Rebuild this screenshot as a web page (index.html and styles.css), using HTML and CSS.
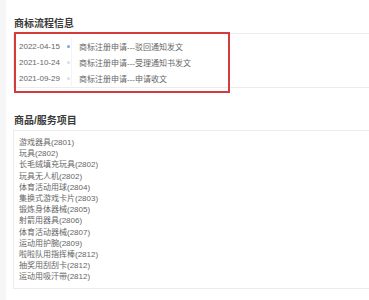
FILE: index.html
```html
<!DOCTYPE html>
<html lang="zh-CN">
<head>
  <meta charset="UTF-8">
  <meta name="viewport" content="width=device-width, initial-scale=1.0">
  <title>商标详情</title>
  <link rel="stylesheet" href="styles.css">
</head>
<body>
  <div class="panel">
    <section class="block">
      <h2>商标流程信息</h2>
      <div class="flow">
        <div class="row">
          <span class="when">2022-04-15</span>
          <span class="dot active"></span>
          <span class="what">商标注册申请---驳回通知发文</span>
        </div>
        <div class="row">
          <span class="when">2021-10-24</span>
          <span class="dot"></span>
          <span class="what">商标注册申请---受理通知书发文</span>
        </div>
        <div class="row">
          <span class="when">2021-09-29</span>
          <span class="dot"></span>
          <span class="what">商标注册申请---申请收文</span>
        </div>
        <div class="mark"></div>
      </div>
    </section>

    <section class="block goods">
      <h2>商品/服务项目</h2>
      <ul class="items">
        <li>游戏器具(2801)</li>
        <li>玩具(2802)</li>
        <li>长毛绒填充玩具(2802)</li>
        <li>玩具无人机(2802)</li>
        <li>体育活动用球(2804)</li>
        <li>集换式游戏卡片(2803)</li>
        <li>锻炼身体器械(2805)</li>
        <li>射箭用器具(2806)</li>
        <li>体育活动器械(2807)</li>
        <li>运动用护腕(2809)</li>
        <li>啦啦队用指挥棒(2812)</li>
        <li>抽奖用刮刮卡(2812)</li>
        <li>运动用吸汗带(2812)</li>
      </ul>
    </section>
  </div>
</body>
</html>
```

FILE: styles.css
```css
body {
  margin: 0;
  background-color: #f6f6f6;
  font-family: "Liberation Sans", "Noto Sans CJK SC", sans-serif;
  color: #666;
}
.panel {
  box-sizing: border-box;
  margin-left: 6px;
  height: 300px;
  overflow: hidden;
  background: #fff;
  padding: 17px 0 0 7px;
}
h2 {
  margin: 0 0 2px 1px;
  font-size: 10px;
  line-height: 14px;
  font-weight: bold;
  color: #3a3a3a;
}
.goods {
  margin-top: 26px;
}
.flow {
  position: relative;
  border: 1px solid #ececec;
  border-right: none;
  padding: 4px 0 1px 5px;
}
.row {
  display: flex;
  align-items: center;
  height: 16px;
  font-size: 8px;
}
.when {
  width: 48px;
}
.dot {
  width: 3px;
  height: 3px;
  border-radius: 50%;
  background: #ddd;
  margin-right: 1px;
}
.dot.active {
  background: #7aa9dc;
}
.what {
  align-self: stretch;
  display: flex;
  align-items: center;
  border-left: 1px solid #f4f4f4;
  padding-left: 7px;
}
.mark {
  position: absolute;
  left: 0;
  top: -2px;
  width: 212px;
  height: 57px;
  border: 2px solid #d23c3c;
}
.items {
  list-style: none;
  margin: 0;
  border: 1px solid #ececec;
  border-right: none;
  padding: 6px 0 5px 5px;
  font-size: 8px;
  line-height: 11.2px;
}
```
